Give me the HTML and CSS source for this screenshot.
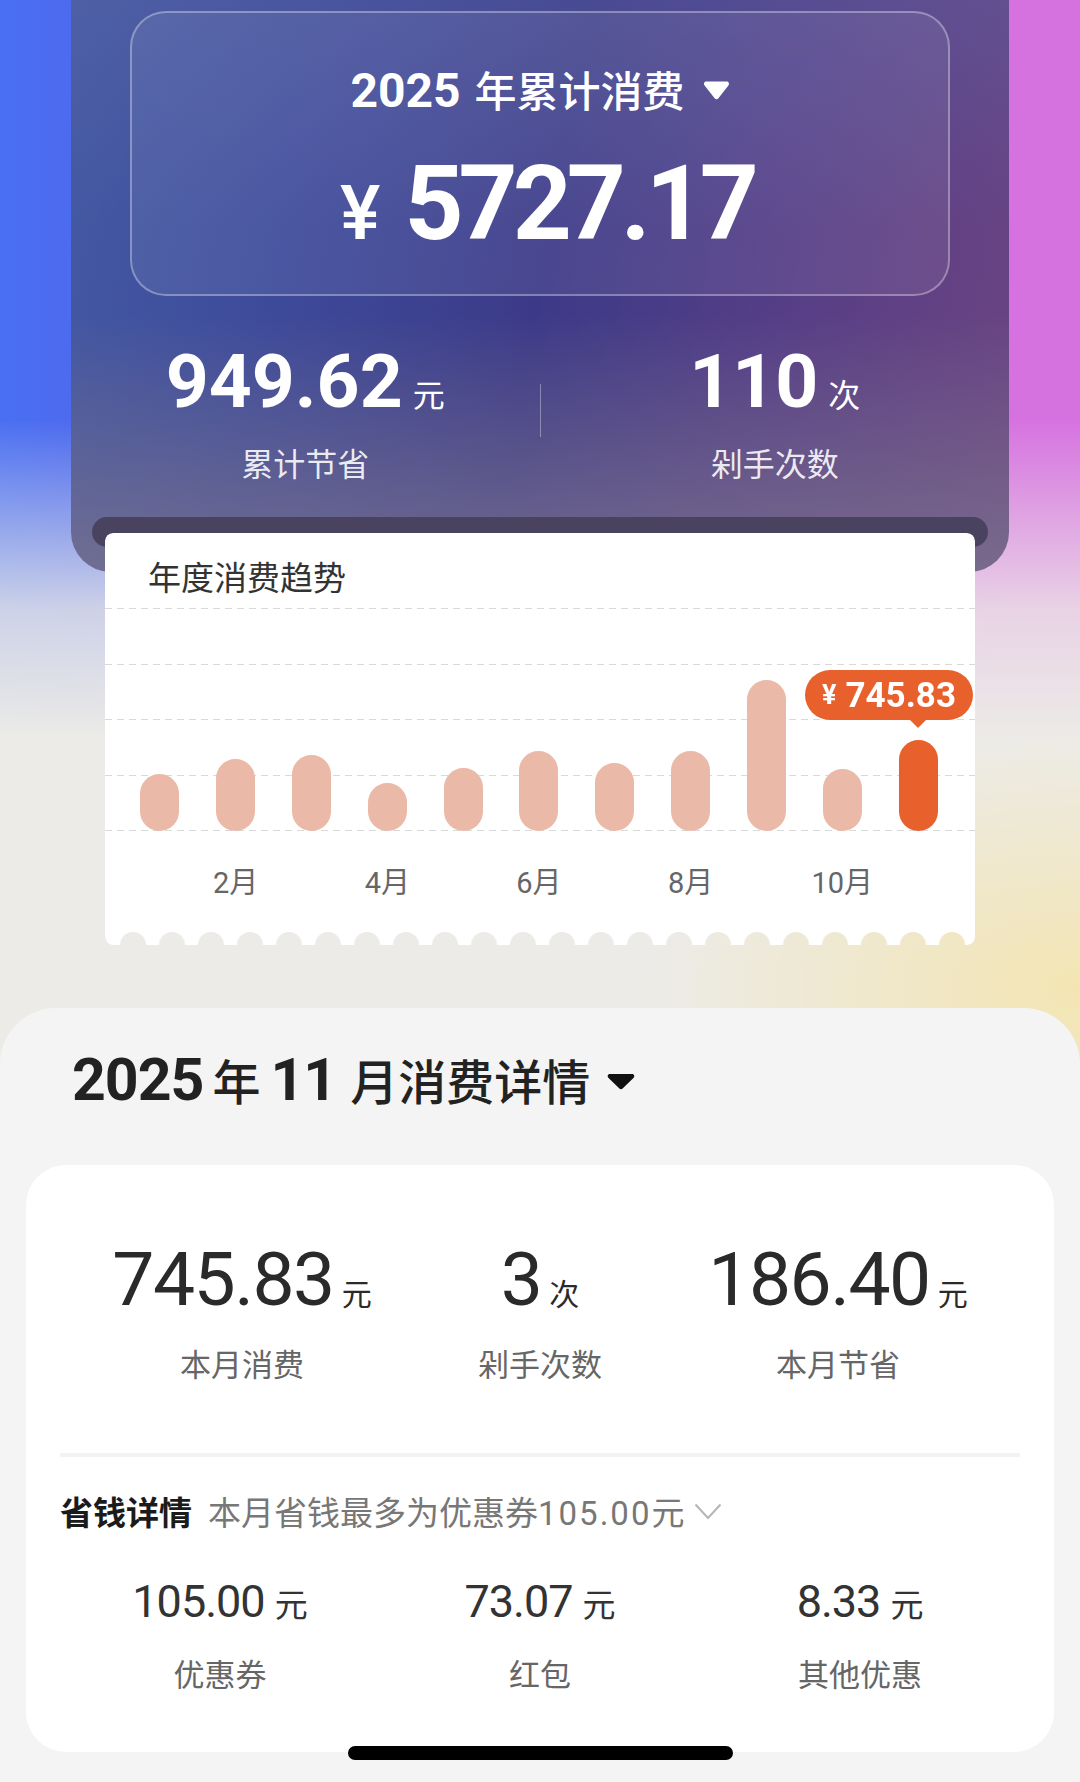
FILE: index.html
```html
<!DOCTYPE html>
<html lang="zh-CN">
<head>
<meta charset="UTF-8">
<meta name="viewport" content="width=device-width, initial-scale=1.0">
<title>年度消费</title>
<link rel="stylesheet" href="styles.css">
</head>
<body>
<div class="page">

  <!-- Year summary panel -->
  <div class="hero">
    <div class="panel">
      <div class="total-box">
        <div class="year-title">
          <span class="num">2025</span><span class="cjk">年累计消费</span><svg class="caret" width="27" height="20" viewBox="0 0 27 20"><path d="M3.5 1.5h20c2.2 0 3.2 2.2 1.9 3.9L15.4 18.2c-1 1.3-2.8 1.3-3.8 0L1.6 5.4C.3 3.7 1.3 1.5 3.5 1.5z" fill="#fff"/></svg>
        </div>
        <div class="total-amount"><span class="yen">¥</span><span class="amount">5727.17</span></div>
      </div>

      <div class="summary">
        <div class="summary-col">
          <div class="summary-value">949.62<span class="unit">元</span></div>
          <div class="summary-label">累计节省</div>
        </div>
        <div class="summary-divider"></div>
        <div class="summary-col">
          <div class="summary-value">110<span class="unit">次</span></div>
          <div class="summary-label">剁手次数</div>
        </div>
      </div>

      <!-- printer slot the receipt comes out of -->
      <div class="slot"></div>
    </div>

    <!-- Receipt with the yearly trend -->
    <div class="receipt">
      <div class="receipt-title">年度消费趋势</div>
      <div class="plot">
        <div class="grid-lines"><i></i><i></i><i></i><i></i><i></i></div>
        <div class="bars">
          <div class="bar-col"><div class="bar" style="height:57px"></div></div>
          <div class="bar-col"><div class="bar" style="height:72px"></div></div>
          <div class="bar-col"><div class="bar" style="height:76px"></div></div>
          <div class="bar-col"><div class="bar" style="height:48px"></div></div>
          <div class="bar-col"><div class="bar" style="height:63px"></div></div>
          <div class="bar-col"><div class="bar" style="height:80px"></div></div>
          <div class="bar-col"><div class="bar" style="height:68px"></div></div>
          <div class="bar-col"><div class="bar" style="height:80px"></div></div>
          <div class="bar-col"><div class="bar" style="height:151px"></div></div>
          <div class="bar-col"><div class="bar" style="height:62px"></div></div>
          <div class="bar-col"><div class="bar active" style="height:91px"></div></div>
        </div>
        <div class="tip"><span class="tip-yen">¥</span>745.83</div>
      </div>
      <div class="months">
        <span></span><span>2月</span><span></span><span>4月</span><span></span><span>6月</span>
        <span></span><span>8月</span><span></span><span>10月</span><span></span>
      </div>
    </div>
  </div>

  <!-- Month detail sheet -->
  <div class="sheet">
    <div class="month-title">
      <span class="num">2025</span><span class="cjk">年</span><span class="num mid">11</span><span class="cjk">月消费详情</span><svg class="caret-dark" width="28" height="17" viewBox="0 0 28 17"><path d="M3 1h22c2 0 3 2.2 1.7 3.7L15.6 15.6c-.9 1-2.3 1-3.2 0L1.3 4.7C0 3.2 1 1 3 1z" fill="#111"/></svg>
    </div>

    <div class="detail-card">
      <div class="stats">
        <div class="stat">
          <div class="stat-value">745.83<span class="unit">元</span></div>
          <div class="stat-label">本月消费</div>
        </div>
        <div class="stat">
          <div class="stat-value">3<span class="unit">次</span></div>
          <div class="stat-label">剁手次数</div>
        </div>
        <div class="stat">
          <div class="stat-value">186.40<span class="unit">元</span></div>
          <div class="stat-label">本月节省</div>
        </div>
      </div>

      <div class="divider"></div>

      <div class="save-head">
        <span class="save-title">省钱详情</span>
        <span class="save-desc">本月省钱最多为优惠券<span class="desc-num">105.00</span>元</span>
        <svg class="chevron" width="28" height="17" viewBox="0 0 28 17"><path d="M1.5 1.5 14 15 26.5 1.5" fill="none" stroke="#b5b5b5" stroke-width="2"/></svg>
      </div>

      <div class="save-stats">
        <div class="save">
          <div class="save-value">105.00<span class="unit">元</span></div>
          <div class="save-label">优惠券</div>
        </div>
        <div class="save">
          <div class="save-value">73.07<span class="unit">元</span></div>
          <div class="save-label">红包</div>
        </div>
        <div class="save">
          <div class="save-value">8.33<span class="unit">元</span></div>
          <div class="save-label">其他优惠</div>
        </div>
      </div>
    </div>

    <div class="home-bar"></div>
  </div>

</div>
</body>
</html>
```

FILE: styles.css
```css
/* Page base */
body {
  margin: 0;
  font-family: Roboto, "Noto Sans CJK SC", sans-serif;
  color: #2c2c2c;
}

.page {
  width: 1080px;
  height: 1782px;
  overflow: hidden;
  background:
    radial-gradient(ellipse 430px 260px at 1080px 990px, rgba(244, 228, 172, 0.9), rgba(244, 228, 172, 0)),
    linear-gradient(to bottom, rgba(237, 235, 230, 0) 420px, rgba(237, 235, 230, 0.8) 610px, #ecebe7 740px),
    linear-gradient(to right, #4a6ff2 0px, #4d6aee 80px, #8c6ee6 420px, #b072e2 720px, #d672e0 1000px);
}

/* Top panel */
.hero {
  padding: 0 71px;
}

.panel {
  padding: 11px 0 25px;
  border-radius: 0 0 40px 40px;
  background:
    linear-gradient(to bottom, rgba(96, 106, 168, 0.35) 0%, rgba(96, 106, 168, 0) 40%),
    linear-gradient(to bottom, rgba(124, 116, 142, 0) 55%, rgba(124, 116, 142, 0.8) 100%),
    linear-gradient(100deg, #445aa4 0%, #3d4a9a 25%, #3c3a88 50%, #573e86 75%, #6c4482 100%);
}

.total-box {
  margin: 0 59px;
  height: 285px;
  box-sizing: border-box;
  padding-top: 52px;
  border: 2px solid rgba(255, 255, 255, 0.32);
  border-radius: 36px;
  background-color: rgba(255, 255, 255, 0.07);
  color: #fff;
}

.year-title {
  text-align: center;
  font-size: 48px;
  line-height: 52px;
  font-weight: 700;
}

.year-title .num {
  margin-right: 14px;
}

.year-title .cjk {
  font-size: 42px;
  font-weight: 500;
  line-height: 1;
}

.caret {
  margin-left: 18px;
  vertical-align: 7px;
}

.total-amount {
  display: flex;
  justify-content: center;
  align-items: baseline;
  margin-top: 32px;
  padding-left: 14px;
  line-height: 110px;
}

.yen {
  font-size: 76px;
  font-weight: 500;
  margin-right: 24px;
}

.amount {
  font-size: 103px;
  font-weight: 700;
  letter-spacing: -5px;
}

/* Saved / count summary */
.summary {
  display: flex;
  margin-top: 43px;
  color: #fff;
}

.summary-col {
  flex: 1;
  text-align: center;
}

.summary-value {
  font-size: 75px;
  font-weight: 700;
  line-height: 84px;
}

.summary-value .unit {
  font-size: 32px;
  font-weight: 400;
  line-height: 1;
  margin-left: 10px;
}

.summary-label {
  margin-top: 23px;
  font-size: 32px;
  line-height: 38px;
  color: rgba(255, 255, 255, 0.88);
}

.summary-divider {
  width: 1px;
  height: 53px;
  margin-top: 45px;
  background-color: rgba(255, 255, 255, 0.35);
}

.slot {
  height: 30px;
  margin: 33px 21px 0;
  border-radius: 15px;
  background-color: #4a4360;
}

/* Receipt card */
.receipt {
  position: relative;
  margin: -39px 34px 0;
  padding: 27px 0 45px;
  border-radius: 8px;
  background-color: #fff;
  -webkit-mask:
    linear-gradient(#000 0 0) top left / 100% calc(100% - 14px) no-repeat,
    radial-gradient(circle 13px at 50% 100%, #0000 12.5px, #000 13.5px) 8.5px 100% / 39px 14px repeat-x;
  mask:
    linear-gradient(#000 0 0) top left / 100% calc(100% - 14px) no-repeat,
    radial-gradient(circle 13px at 50% 100%, #0000 12.5px, #000 13.5px) 8.5px 100% / 39px 14px repeat-x;
}

.receipt-title {
  padding-left: 43px;
  font-size: 33px;
  line-height: 38px;
  color: #333;
}

.plot {
  position: relative;
  display: grid;
  margin-top: 10px;
  height: 223px;
}

.grid-lines,
.bars {
  grid-area: 1 / 1;
}

.grid-lines {
  display: flex;
  flex-direction: column;
  justify-content: space-between;
}

.grid-lines i {
  display: block;
  height: 1px;
  background: repeating-linear-gradient(to right, #d9d9d9 0 7px, transparent 7px 12px);
}

.bars {
  display: flex;
  align-items: flex-end;
  padding: 0 19px 0 17px;
}

.bar-col {
  flex: 1;
  display: flex;
  justify-content: center;
}

.bar {
  width: 39px;
  border-radius: 20px;
  background-color: #ebb9a8;
}

.bar.active {
  background-color: #e8612c;
}

/* Tooltip over the current month */
.tip {
  position: absolute;
  top: 62px;
  right: 2px;
  width: 168px;
  height: 50px;
  border-radius: 25px;
  background-color: #e8612c;
  color: #fff;
  font-size: 35px;
  font-weight: 700;
  display: flex;
  justify-content: center;
  align-items: center;
}

.tip-yen {
  font-size: 27px;
  margin-right: 9px;
}

.tip::after {
  content: "";
  position: absolute;
  top: 100%;
  left: 105px;
  border-left: 8px solid transparent;
  border-right: 8px solid transparent;
  border-top: 8px solid #e8612c;
}

.months {
  display: flex;
  height: 34px;
  margin-top: 35px;
  padding: 0 19px 0 17px;
  font-size: 29px;
  line-height: 34px;
  color: #666;
}

.months span {
  flex: 1;
  text-align: center;
}

/* Bottom sheet */
.sheet {
  position: relative;
  margin-top: 63px;
  padding: 40px 26px 30px;
  border-radius: 56px 56px 0 0;
  background-color: #f4f4f4;
}

.month-title {
  padding-left: 46px;
  font-size: 59px;
  line-height: 64px;
  font-weight: 700;
  color: #222;
}

.month-title .num {
  letter-spacing: -1px;
  margin-right: 9px;
}

.month-title .mid {
  margin-left: 10px;
  margin-right: 14px;
}

.month-title .cjk {
  font-size: 48px;
  font-weight: 500;
  line-height: 1;
}

.caret-dark {
  margin-left: 17px;
  vertical-align: 10px;
}

.detail-card {
  margin-top: 53px;
  padding: 77px 0 58px;
  border-radius: 40px;
  background-color: #fff;
}

.stats {
  display: flex;
  padding: 0 67px;
}

.stat {
  flex: 1;
  text-align: center;
}

.stat-value {
  font-size: 75px;
  line-height: 75px;
  letter-spacing: -1.5px;
  color: #2a2a2a;
}

.stat-value .unit {
  font-size: 30px;
  line-height: 1;
  letter-spacing: 0;
  margin-left: 8px;
}

.stat-label {
  margin-top: 30px;
  font-size: 31px;
  line-height: 37px;
  color: #666;
}

.divider {
  height: 4px;
  margin: 69px 34px 0;
  background-color: #f3f3f3;
}

.save-head {
  display: flex;
  align-items: center;
  height: 40px;
  margin-top: 34px;
  padding: 0 34px;
}

.save-title {
  font-size: 33px;
  font-weight: 700;
  color: #1b1b1b;
}

.save-desc {
  margin-left: 16px;
  font-size: 33px;
  color: #777;
}

.desc-num {
  letter-spacing: 2px;
}

.chevron {
  margin-left: 10px;
}

.save-stats {
  display: flex;
  margin-top: 48px;
  padding: 0 34px;
}

.save {
  flex: 1;
  text-align: center;
}

.save-value {
  font-size: 45px;
  line-height: 45px;
  letter-spacing: -1px;
  color: #333;
}

.save-value .unit {
  font-size: 33px;
  line-height: 1;
  letter-spacing: 0;
  margin-left: 10px;
}

.save-label {
  margin-top: 33px;
  font-size: 31px;
  line-height: 37px;
  color: #666;
}

/* iOS home indicator */
.home-bar {
  position: absolute;
  left: 348px;
  bottom: 22px;
  width: 385px;
  height: 14px;
  border-radius: 7px;
  background-color: #000;
}
```
